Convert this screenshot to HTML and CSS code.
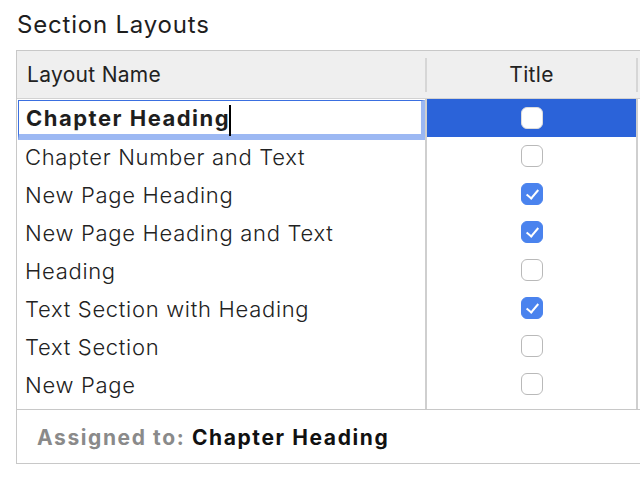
FILE: index.html
```html
<!DOCTYPE html>
<html lang="en">
<head>
    <meta charset="UTF-8">
    <title>Section Layouts</title>
    <link rel="stylesheet" href="styles.css">
</head>
<body>

<h1 class="title">Section Layouts</h1>

<div class="panel">
    <div class="head">
        <div class="head-cell name-col">Layout Name</div>
        <div class="head-cell title-col">Title</div>
        <div class="head-cell rest-col"></div>
    </div>

    <div class="rows">
        <div class="row selected">
            <div class="cell name-col">
                <div class="editor">Chapter Heading<span class="caret"></span></div>
            </div>
            <div class="cell title-col"><span class="check"></span></div>
            <div class="cell rest-col"></div>
        </div>
        <div class="row">
            <div class="cell name-col">Chapter Number and Text</div>
            <div class="cell title-col"><span class="check"></span></div>
            <div class="cell rest-col"></div>
        </div>
        <div class="row">
            <div class="cell name-col">New Page Heading</div>
            <div class="cell title-col"><span class="check on"></span></div>
            <div class="cell rest-col"></div>
        </div>
        <div class="row">
            <div class="cell name-col">New Page Heading and Text</div>
            <div class="cell title-col"><span class="check on"></span></div>
            <div class="cell rest-col"></div>
        </div>
        <div class="row">
            <div class="cell name-col">Heading</div>
            <div class="cell title-col"><span class="check"></span></div>
            <div class="cell rest-col"></div>
        </div>
        <div class="row">
            <div class="cell name-col">Text Section with Heading</div>
            <div class="cell title-col"><span class="check on"></span></div>
            <div class="cell rest-col"></div>
        </div>
        <div class="row">
            <div class="cell name-col">Text Section</div>
            <div class="cell title-col"><span class="check"></span></div>
            <div class="cell rest-col"></div>
        </div>
        <div class="row">
            <div class="cell name-col">New Page</div>
            <div class="cell title-col"><span class="check"></span></div>
            <div class="cell rest-col"></div>
        </div>
        <div class="row filler">
            <div class="cell name-col"></div>
            <div class="cell title-col"></div>
            <div class="cell rest-col"></div>
        </div>
    </div>

    <div class="footer">
        <span class="label">Assigned to:</span> <span class="value">Chapter Heading</span>
    </div>
</div>

</body>
</html>
```

FILE: styles.css
```css
body {
    margin: 0;
    font-family: Inter, "Liberation Sans", sans-serif;
    color: #222;
    background: white;
    overflow: hidden;
}
.title {
    margin: 0;
    padding: 10px 0 0 17px;
    height: 40px;
    box-sizing: border-box;
    font-size: 24px;
    line-height: 30px;
    font-weight: 400;
    letter-spacing: 0.8px;
    color: #1e1e1e;
}
.panel {
    margin-left: 16px;
    margin-top: 10px;
    width: 640px;
    border: 1px solid #c8c8c8;
    border-right: none;
}
.head {
    display: flex;
    height: 47px;
    background-color: #efefef;
    border-bottom: 1px solid #d2d2d2;
    align-items: center;
}
.head-cell {
    font-size: 21px;
    letter-spacing: 0.3px;
    height: 34px;
    line-height: 34px;
    box-sizing: border-box;
}
.name-col {
    width: 410px;
    flex: none;
    box-sizing: border-box;
}
.title-col {
    width: 211px;
    flex: none;
    box-sizing: border-box;
    text-align: center;
}
.rest-col {
    flex: 1;
}
.head-cell.name-col {
    padding-left: 10px;
    border-right: 2px solid #d6d6d6;
}
.head-cell.title-col {
    border-right: 2px solid #d6d6d6;
}
.row {
    display: flex;
    height: 38px;
}
.row.filler {
    height: 6px;
}
.cell {
    font-size: 22px;
    font-weight: 300;
    letter-spacing: 0.7px;
    line-height: 40px;
}
.cell.name-col {
    position: relative;
    padding-left: 8px;
    border-right: 2px solid #cfcfcf;
}
.cell.title-col {
    border-right: 2px solid #cfcfcf;
    display: flex;
    align-items: center;
    justify-content: center;
}
.row.selected .title-col {
    background-color: #2b63d9;
}
.editor {
    position: absolute;
    left: 1px;
    top: 1px;
    right: 0;
    bottom: -3px;
    padding-left: 7px;
    background: white;
    border: 1px solid #3a6fe0;
    border-bottom: 6px solid #9cb8f3;
    border-right: 4px solid #9cb8f3;
    font-weight: 700;
    letter-spacing: 1.5px;
    color: #1e1e1e;
    line-height: 34px;
    z-index: 1;
}
.caret {
    display: inline-block;
    width: 2px;
    height: 31px;
    margin-left: -1px;
    vertical-align: middle;
    background: black;
}
.check {
    width: 22px;
    height: 22px;
    border: 1px solid #b9b9b9;
    border-radius: 6px;
    background: white;
    box-sizing: border-box;
    position: relative;
}
.row.selected .check {
    border-color: #dcdcdc;
}
.check.on {
    background: #4a83ee;
    border-color: #4a83ee;
}
.check.on::after {
    content: "";
    position: absolute;
    left: 7px;
    top: 3px;
    width: 5px;
    height: 10px;
    border: solid white;
    border-width: 0 2.5px 2.5px 0;
    transform: rotate(40deg);
}
.footer {
    border-top: 1px solid #c8c8c8;
    height: 54px;
    box-sizing: border-box;
    padding: 2px 0 0 20px;
    line-height: 52px;
    font-size: 21px;
    font-weight: 700;
    letter-spacing: 1.6px;
}
.footer .label {
    color: #8a8a8a;
}
.footer .value {
    color: #111;
}
```
